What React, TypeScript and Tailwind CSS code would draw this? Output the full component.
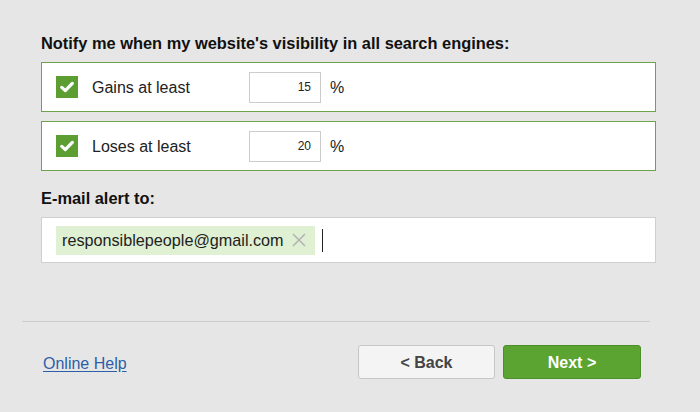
import { useState } from 'react';

function CheckBox({ checked }: { checked: boolean }) {
  return (
    <div className="w-[22px] h-[22px] bg-[#5c9e31] flex items-center justify-center shrink-0">
      {checked && (
        <svg width="14" height="12" viewBox="0 0 14 12">
          <path d="M1.8 6.4 L5.3 9.6 L12.3 2.4" fill="none" stroke="#fff" strokeWidth="3.2" strokeLinecap="round" strokeLinejoin="round" />
        </svg>
      )}
    </div>
  );
}

function ThresholdRow({ label, value }: { label: string; value: string }) {
  return (
    <div className="h-[50px] border border-[#6ea34e] bg-white flex items-center pl-[14px]">
      <CheckBox checked />
      <span className="ml-[14px] w-[157px] pt-[1px] text-[16px] text-[#222]">{label}</span>
      <div className="w-[72px] h-[31px] border border-[#cccccc] bg-white flex items-center justify-end pr-[9px] text-[12px] text-[#222]">
        {value}
      </div>
      <span className="ml-[9px] pt-[1px] text-[16px] text-[#222]">%</span>
    </div>
  );
}

export default function App() {
  const [email] = useState('responsiblepeople@gmail.com');

  return (
    <div className="w-[700px] h-[412px] bg-[#e6e6e6] font-['Liberation_Sans',Arial,sans-serif] overflow-hidden">
      <div className="pl-[41px] w-[656px] pt-[33px]">
        <div className="text-[16.4px] leading-[20px] font-bold text-[#111] mb-[9px]">
          Notify me when my website's visibility in all search engines:
        </div>
        <div className="flex flex-col gap-[9px]">
          <ThresholdRow label="Gains at least" value="15" />
          <ThresholdRow label="Loses at least" value="20" />
        </div>
        <div className="text-[16.4px] leading-[20px] font-bold text-[#111] mt-[17px] mb-[9px]">E-mail alert to:</div>
        <div className="h-[46px] border border-[#cfcfcf] bg-white flex items-center pl-[14px]">
          <div className="h-[29px] bg-[#dff0d3] flex items-center pl-[6px] pr-[9px] text-[16.2px] text-[#222]">
            {email}
            <svg className="ml-[8px]" width="14" height="14" viewBox="0 0 14 14">
              <path d="M1 1 L13 13 M13 1 L1 13" stroke="#b4b4b4" strokeWidth="1.6" />
            </svg>
          </div>
          <div className="ml-[7px] w-px h-[23px] bg-[#222]" />
        </div>
      </div>
      <div className="mx-[22px] w-[628px] mt-[58px] border-t border-[#cccccc]" />
      <div className="flex items-center pl-[43px] w-[641px] mt-[23px]">
        <a href="#" className="pt-[3px] text-[16px] text-[#2d5ea8] underline underline-offset-2">Online Help</a>
        <div className="ml-auto flex gap-[8px]">
          <button className="w-[137px] h-[34px] pt-[2px] rounded-[3px] bg-[#f4f4f4] border border-[#c6c6c6] text-[16px] font-bold text-[#444]">
            &lt; Back
          </button>
          <button className="w-[138px] h-[34px] pt-[2px] rounded-[3px] bg-[#5ba431] border border-[#4c8f29] text-[16px] font-bold text-white">
            Next &gt;
          </button>
        </div>
      </div>
    </div>
  );
}
